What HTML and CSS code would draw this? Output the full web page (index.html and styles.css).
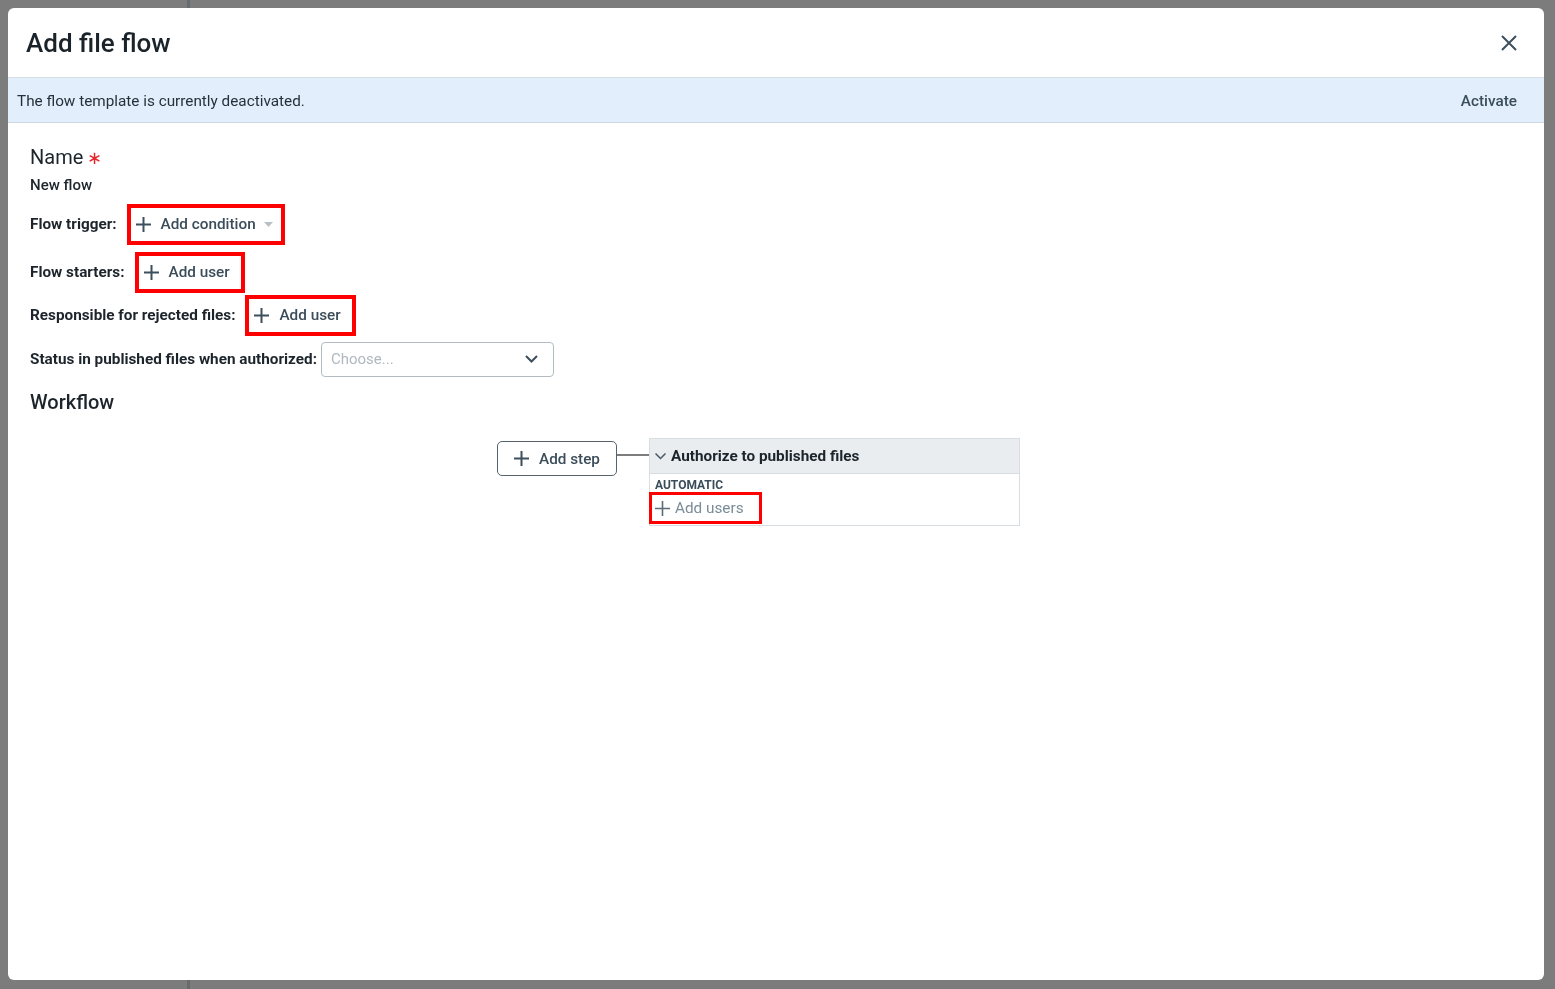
FILE: index.html
```html
<!DOCTYPE html>
<html>
<head>
    <meta charset="UTF-8">
    <title>Add file flow</title>
    <link rel="stylesheet" href="styles.css">
</head>
<body>
    <div class="app-bg">
        <div class="app-side"></div>
        <div class="app-main"></div>
    </div>

    <div class="modal">
        <div class="modal-header">
            <div class="modal-title">Add file flow</div>
            <div class="close-btn">
                <svg width="16" height="16" viewBox="0 0 16 16"><path d="M1 1L15 15M15 1L1 15" stroke="#3d4f5c" stroke-width="2" fill="none"/></svg>
            </div>
        </div>

        <div class="notice">
            <span>The flow template is currently deactivated.</span>
            <span class="notice-action">Activate</span>
        </div>

        <div class="modal-body">
            <div class="field-title">Name <span class="required">&lowast;</span></div>
            <div class="field-value">New flow</div>

            <div class="field-row row-trigger">
                <span class="field-label">Flow trigger:</span>
                <div class="add-btn marked trigger-btn">
                    <svg class="plus" width="15" height="15" viewBox="0 0 15 15"><path d="M7.5 0V15M0 7.5H15" stroke="#3d4f5c" stroke-width="2"/></svg>
                    <span>Add condition</span>
                    <svg class="caret" width="9" height="5" viewBox="0 0 9 5"><path d="M0 0H9L4.5 5Z" fill="#b8c0c6"/></svg>
                </div>
            </div>

            <div class="field-row row-starters">
                <span class="field-label">Flow starters:</span>
                <div class="add-btn marked">
                    <svg class="plus" width="15" height="15" viewBox="0 0 15 15"><path d="M7.5 0V15M0 7.5H15" stroke="#3d4f5c" stroke-width="2"/></svg>
                    <span>Add user</span>
                </div>
            </div>

            <div class="field-row row-rejected">
                <span class="field-label">Responsible for rejected files:</span>
                <div class="add-btn marked">
                    <svg class="plus" width="15" height="15" viewBox="0 0 15 15"><path d="M7.5 0V15M0 7.5H15" stroke="#3d4f5c" stroke-width="2"/></svg>
                    <span>Add user</span>
                </div>
            </div>

            <div class="field-row row-status">
                <span class="field-label">Status in published files when authorized:</span>
                <div class="select">
                    <span>Choose...</span>
                    <svg width="13" height="8" viewBox="0 0 13 8"><path d="M1 1L6.5 6.5L12 1" stroke="#3d4f5c" stroke-width="2" fill="none"/></svg>
                </div>
            </div>

            <div class="section-title">Workflow</div>

            <div class="workflow">
                <div class="add-step">
                    <svg width="15" height="15" viewBox="0 0 15 15"><path d="M7.5 0V15M0 7.5H15" stroke="#3d4f5c" stroke-width="2"/></svg>
                    <span>Add step</span>
                </div>
                <div class="connector"></div>
                <div class="step-card">
                    <div class="step-head">
                        <svg width="11" height="7" viewBox="0 0 11 7"><path d="M0.5 0.5L5.5 5.5L10.5 0.5" stroke="#4a5965" stroke-width="1.5" fill="none"/></svg>
                        <span>Authorize to published files</span>
                    </div>
                    <div class="step-body">
                        <div class="step-type">AUTOMATIC</div>
                        <div class="add-users">
                            <svg width="15" height="15" viewBox="0 0 15 15"><path d="M7.5 0V15M0 7.5H15" stroke="#5b6b77" stroke-width="1.6"/></svg>
                            <span>Add users</span>
                        </div>
                    </div>
                </div>
            </div>
        </div>
    </div>
</body>
</html>
```

FILE: styles.css
```css
body {
    margin: 0;
    padding: 0;
    font-family: Roboto, 'Liberation Sans', Arial, sans-serif;
    color: #1d252c;
    background: #7c7c7c;
    height: 100vh;
    overflow: hidden;
}

.app-bg {
    display: flex;
    height: 100vh;
}

.app-side {
    width: 187px;
    border-right: 3px solid #676b6e;
}

.app-main {
    flex: 1;
}

.modal {
    position: fixed;
    top: 8px;
    left: 8px;
    width: 1536px;
    height: 972px;
    background: #fff;
    border-radius: 6px;
    overflow: hidden;
}

.modal-header {
    height: 70px;
    box-sizing: border-box;
    display: flex;
    align-items: center;
    justify-content: space-between;
    padding: 0 27px 0 18px;
    border-bottom: 1px solid #d6dde3;
}

.modal-title {
    font-size: 26px;
    font-weight: 500;
    color: #1b232a;
}

.close-btn {
    display: flex;
    width: 16px;
    height: 16px;
}

.notice {
    height: 45px;
    box-sizing: border-box;
    display: flex;
    align-items: center;
    justify-content: space-between;
    padding: 1px 27px 0 9px;
    background: #e2eefb;
    border-bottom: 1px solid #cfd9e2;
    font-size: 15.3px;
    color: #27313a;
}

.notice-action {
    font-weight: 500;
    color: #3b4d5a;
}

.modal-body {
    padding: 22px 22px;
}

.field-title {
    font-size: 20px;
    line-height: 24px;
}

.required {
    color: #e5262b;
    font-size: 18px;
    margin-left: -1px;
}

.field-value {
    margin-top: 5px;
    font-size: 15px;
    line-height: 20px;
    font-weight: 500;
}

.field-row {
    display: flex;
    align-items: center;
    gap: 10px;
    height: 42px;
}

.row-trigger { margin-top: 8px; }
.row-starters { margin-top: 6px; }
.row-rejected { margin-top: 1px; }
.row-status { margin-top: 2px; gap: 4px; }

.field-label {
    font-size: 15.3px;
    font-weight: 700;
}

.add-btn {
    display: flex;
    align-items: center;
    gap: 10px;
    font-size: 15.3px;
    font-weight: 500;
    color: #3b4d5a;
}

.marked {
    height: 41px;
    box-sizing: border-box;
    border: 4px solid #ff0000;
    padding: 0 11px 0 5px;
}

.trigger-btn {
    padding-right: 8px;
}

.caret {
    margin-left: -2px;
}

.select {
    width: 233px;
    height: 35px;
    box-sizing: border-box;
    border: 1px solid #b3bcc3;
    border-radius: 4px;
    display: flex;
    align-items: center;
    justify-content: space-between;
    padding: 0 15px 0 9px;
    font-size: 15px;
    color: #b0b9c0;
}

.section-title {
    margin-top: 10px;
    font-size: 20px;
    line-height: 24px;
    font-weight: 500;
}

.workflow {
    display: flex;
    align-items: flex-start;
    margin-top: 24px;
    padding-left: 467px;
}

.add-step {
    margin-top: 3px;
    width: 120px;
    height: 35px;
    box-sizing: border-box;
    border: 1px solid #56636d;
    border-radius: 5px;
    display: flex;
    align-items: center;
    justify-content: center;
    gap: 10px;
    font-size: 15.3px;
    font-weight: 500;
    color: #3b4d5a;
}

.connector {
    width: 32px;
    height: 2px;
    margin-top: 16px;
    background: #7d7d7d;
}

.step-card {
    width: 371px;
    box-sizing: border-box;
    border: 1px solid #d8dde1;
}

.step-head {
    height: 35px;
    box-sizing: border-box;
    display: flex;
    align-items: center;
    gap: 5px;
    padding-left: 5px;
    background: #e9edef;
    border-bottom: 1px solid #d8dde1;
    font-size: 15.3px;
    font-weight: 700;
}

.step-body {
    padding: 4px 0 4px 2px;
}

.step-type {
    padding-left: 3px;
    font-size: 12px;
    line-height: 14px;
    font-weight: 700;
    color: #3b4d5a;
}

.add-users {
    display: inline-flex;
    align-items: center;
    gap: 5px;
    margin-top: 3px;
    height: 26px;
    padding: 0 15px 0 3px;
    outline: 3px solid #ff0000;
    font-size: 15.3px;
    color: #7a8c98;
}
```
